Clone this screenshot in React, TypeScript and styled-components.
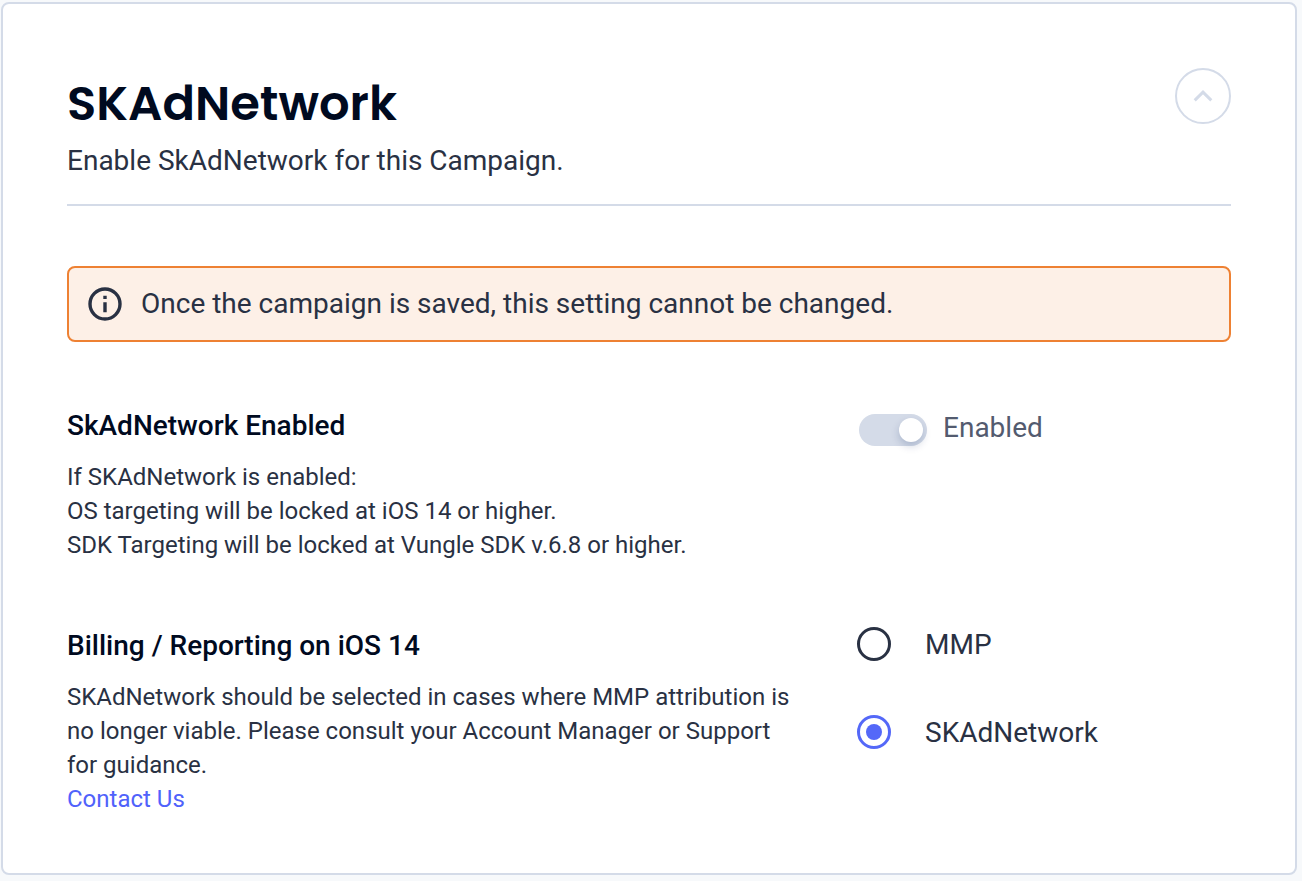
import React, { useState } from "react";
import styled, { createGlobalStyle } from "styled-components";

const GlobalStyle = createGlobalStyle`
  * { box-sizing: border-box; }
  body {
    margin: 0;
    background: #f7f9fb;
    color: #293143;
    font-family: Roboto, "Liberation Sans", sans-serif;
  }
`;

const Page = styled.main`
  padding: 2px 5px 6px 1px;
`;

const Card = styled.section`
  padding: 64px 64px 57px;
  border: 2px solid #d4dbe8;
  border-radius: 8px;
  background: #fff;
`;

const Header = styled.header`
  display: flex;
  justify-content: space-between;
  align-items: flex-start;
  padding-bottom: 22px;
  border-bottom: 2px solid #d4dbe8;
`;

const Title = styled.h1`
  margin: 0;
  color: #000a1f;
  font-family: Poppins, Inter, sans-serif;
  font-size: 48px;
  font-weight: 600;
  line-height: 72px;
`;

const Subtitle = styled.p`
  margin: 0;
  font-size: 28px;
  line-height: 42px;
`;

const CollapseButton = styled.button`
  display: grid;
  place-items: center;
  width: 56px;
  height: 56px;
  padding: 0;
  border: 2px solid #d4dbe8;
  border-radius: 50%;
  background: #fff;
  color: #d4dbe8;
`;

const Notice = styled.div`
  display: flex;
  align-items: center;
  gap: 18px;
  margin: 60px 0 64px;
  padding: 16px 18px;
  border: 2px solid #ee8133;
  border-radius: 8px;
  background: #fdf0e7;
  font-size: 28px;
  line-height: 40px;
`;

const Setting = styled.div`
  display: grid;
  grid-template-columns: 33fr 17fr;
  column-gap: 64px;
  & + & { margin-top: 64px; }
`;

const SettingTitle = styled.h2`
  margin: 0 0 14px;
  color: #000a1f;
  font-size: 28px;
  font-weight: 500;
  line-height: 40px;
`;

const Description = styled.p`
  margin: 0;
  font-size: 24px;
  line-height: 34px;
`;

const Link = styled.a`
  color: #5062fb;
  text-decoration: none;
`;

const SwitchLabel = styled.label`
  display: flex;
  align-items: flex-start;
  justify-self: start;
  gap: 16px;
  padding-left: 2px;
  color: #535b6f;
  font-size: 28px;
  line-height: 44px;
`;

const SwitchInput = styled.input`
  appearance: none;
  display: flex;
  align-items: center;
  justify-content: flex-end;
  width: 68px;
  height: 32px;
  margin: 8px 0 0;
  padding: 4px;
  border-radius: 16px;
  background: #d4dbe8;
  &::before {
    content: "";
    width: 24px;
    height: 24px;
    border-radius: 50%;
    background: #fff;
    box-shadow: 0 4px 8px #00236033;
  }
`;

const RadioGroup = styled.div`
  display: flex;
  flex-direction: column;
  align-items: flex-start;
  gap: 52px;
`;

const RadioLabel = styled.label`
  display: flex;
  align-items: center;
  gap: 34px;
  height: 36px;
  font-size: 28px;
`;

const RadioInput = styled.input`
  appearance: none;
  display: grid;
  place-items: center;
  width: 34px;
  height: 34px;
  margin: 0;
  border: 3px solid #293143;
  border-radius: 50%;
  &:checked { border-color: #5468f8; }
  &:checked::before {
    content: "";
    width: 16px;
    height: 16px;
    border-radius: 50%;
    background: #5468f8;
  }
`;

export default function App() {
  const [billing, setBilling] = useState("skan");
  return (
    <Page>
      <GlobalStyle />
      <Card>
        <Header>
          <div>
            <Title>SKAdNetwork</Title>
            <Subtitle>Enable SkAdNetwork for this Campaign.</Subtitle>
          </div>
          <CollapseButton type="button" aria-label="Collapse">
            <svg width="20" height="12" viewBox="0 0 20 12" fill="none" stroke="currentColor" strokeWidth="3">
              <path d="M1.7 10.4 10 2.2 18.3 10.4" />
            </svg>
          </CollapseButton>
        </Header>
        <Notice role="note">
          <svg width="36" height="36" viewBox="0 0 36 36" fill="none" stroke="currentColor" strokeWidth="3.4">
            <circle cx="18" cy="18" r="15" />
            <path d="M18 16.2v10M18 9.8v3.3" />
          </svg>
          <span>Once the campaign is saved, this setting cannot be changed.</span>
        </Notice>
        <Setting>
          <div>
            <SettingTitle>SkAdNetwork Enabled</SettingTitle>
            <Description>
              If SKAdNetwork is enabled:<br />
              OS targeting will be locked at iOS 14 or higher.<br />
              SDK Targeting will be locked at Vungle SDK v.6.8 or higher.
            </Description>
          </div>
          <SwitchLabel>
            <SwitchInput type="checkbox" role="switch" defaultChecked disabled />
            Enabled
          </SwitchLabel>
        </Setting>
        <Setting>
          <div>
            <SettingTitle>Billing / Reporting on iOS 14</SettingTitle>
            <Description>
              SKAdNetwork should be selected in cases where MMP attribution is no longer viable. Please consult your Account Manager or Support for guidance.<br />
              <Link href="#contact">Contact Us</Link>
            </Description>
          </div>
          <RadioGroup role="radiogroup" aria-label="Billing / Reporting on iOS 14">
            <RadioLabel>
              <RadioInput type="radio" name="billing" checked={billing === "mmp"} onChange={() => setBilling("mmp")} />
              MMP
            </RadioLabel>
            <RadioLabel>
              <RadioInput type="radio" name="billing" checked={billing === "skan"} onChange={() => setBilling("skan")} />
              SKAdNetwork
            </RadioLabel>
          </RadioGroup>
        </Setting>
      </Card>
    </Page>
  );
}
